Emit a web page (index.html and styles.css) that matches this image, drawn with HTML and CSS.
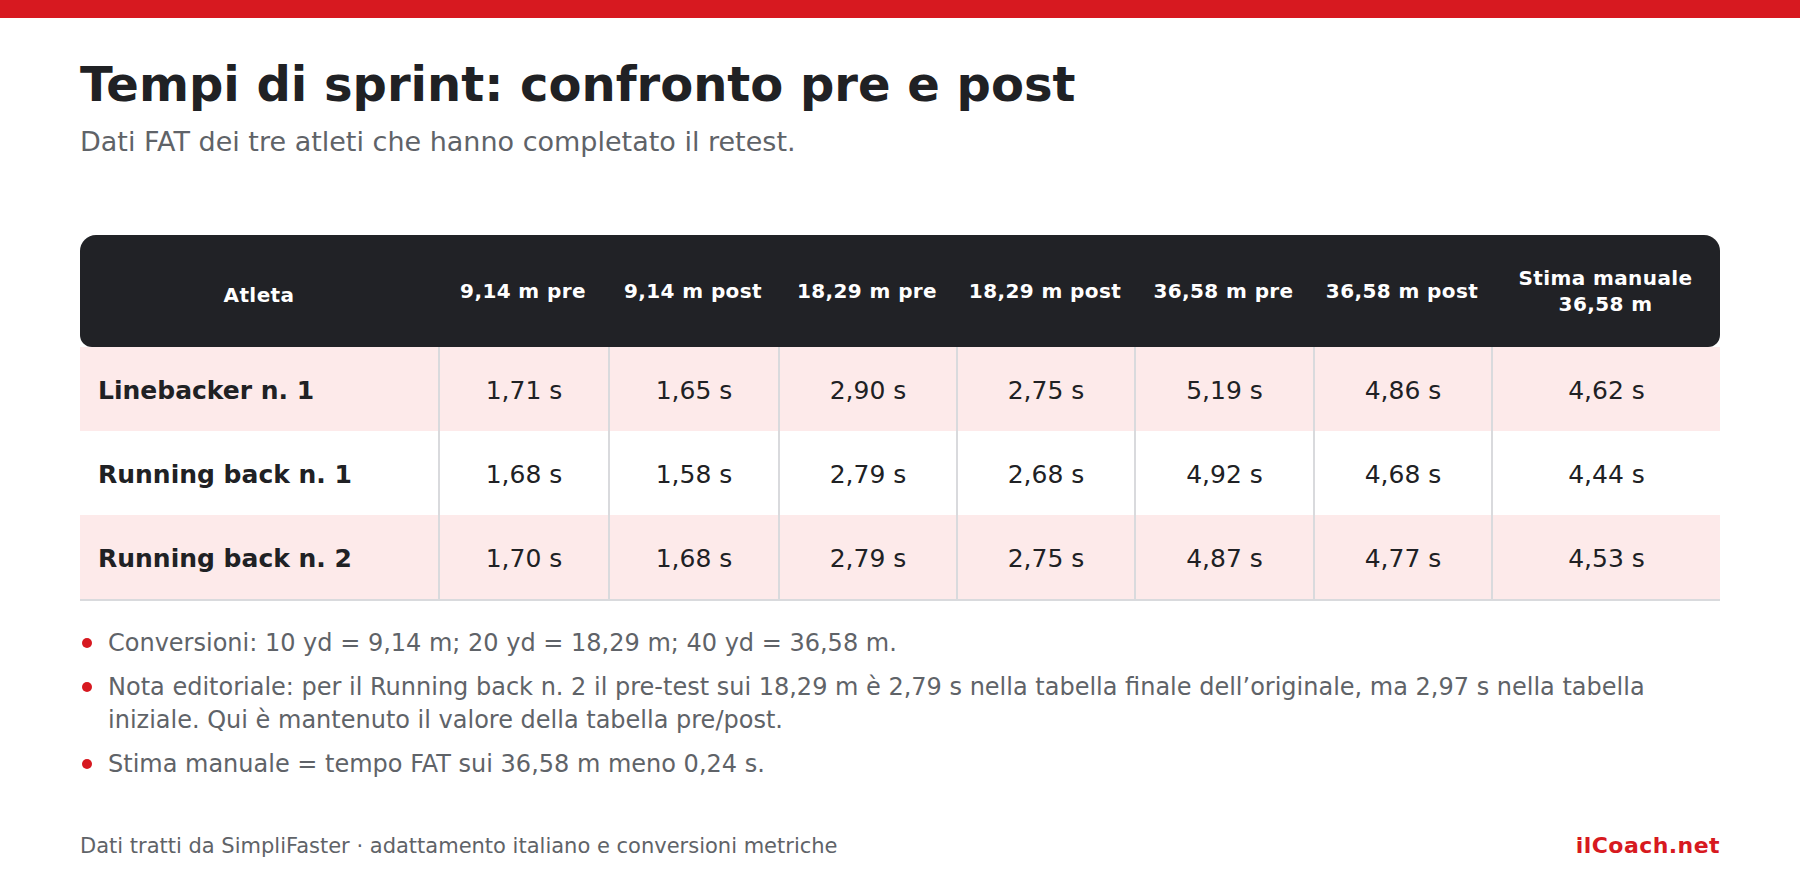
FILE: index.html
```html
<!DOCTYPE html>
<html lang="it">
<head>
<meta charset="utf-8">
<title>Tempi di sprint: confronto pre e post</title>
<link rel="stylesheet" href="styles.css">
</head>
<body>
<div class="topbar"></div>
<main class="page">
  <h1 class="title">Tempi di sprint: confronto pre e post</h1>
  <p class="subtitle">Dati FAT dei tre atleti che hanno completato il retest.</p>

  <table class="data">
    <colgroup>
      <col class="c-name">
      <col class="c-s">
      <col class="c-s">
      <col class="c-m">
      <col class="c-m">
      <col class="c-m2">
      <col class="c-m">
      <col class="c-l">
    </colgroup>
    <thead>
      <tr>
        <th class="th-name">Atleta</th>
        <th>9,14 m pre</th>
        <th>9,14 m post</th>
        <th>18,29 m pre</th>
        <th>18,29 m post</th>
        <th>36,58 m pre</th>
        <th>36,58 m post</th>
        <th>Stima manuale<br>36,58 m</th>
      </tr>
    </thead>
    <tbody>
      <tr class="alt">
        <td class="name">Linebacker n. 1</td>
        <td>1,71 s</td><td>1,65 s</td><td>2,90 s</td><td>2,75 s</td><td>5,19 s</td><td>4,86 s</td><td>4,62 s</td>
      </tr>
      <tr>
        <td class="name">Running back n. 1</td>
        <td>1,68 s</td><td>1,58 s</td><td>2,79 s</td><td>2,68 s</td><td>4,92 s</td><td>4,68 s</td><td>4,44 s</td>
      </tr>
      <tr class="alt last">
        <td class="name">Running back n. 2</td>
        <td>1,70 s</td><td>1,68 s</td><td>2,79 s</td><td>2,75 s</td><td>4,87 s</td><td>4,77 s</td><td>4,53 s</td>
      </tr>
    </tbody>
  </table>

  <ul class="notes">
    <li>Conversioni: 10 yd = 9,14 m; 20 yd = 18,29 m; 40 yd = 36,58 m.</li>
    <li>Nota editoriale: per il Running back n. 2 il pre-test sui 18,29 m è 2,79 s nella tabella finale dell’originale, ma 2,97 s nella tabella iniziale. Qui è mantenuto il valore della tabella pre/post.</li>
    <li>Stima manuale = tempo FAT sui 36,58 m meno 0,24 s.</li>
  </ul>

  <footer class="footer">
    <span class="source">Dati tratti da SimpliFaster · adattamento italiano e conversioni metriche</span>
    <span class="brand">ilCoach.net</span>
  </footer>
</main>
</body>
</html>
```

FILE: styles.css
```css
html, body {
  margin: 0;
  padding: 0;
  background: #ffffff;
}

body {
  font-family: "DejaVu Sans", Verdana, sans-serif;
  color: #202124;
}

.topbar {
  height: 18px;
  background: #d71920;
}

.page {
  padding: 38px 80px 0;
}

.title {
  margin: 0;
  font-size: 48px;
  line-height: 1.2;
  font-weight: 700;
  color: #202124;
}

.subtitle {
  margin: 12px 0 0;
  font-size: 27px;
  line-height: 1.2;
  color: #5f6368;
}

.data {
  margin-top: 77px;
  width: 1640px;
  table-layout: fixed;
  border-collapse: separate;
  border-spacing: 0;
}

.c-name { width: 358px; }
.c-s { width: 170px; }
.c-m { width: 178px; }
.c-m2 { width: 179px; }
.c-l { width: 229px; }

.data th {
  background: #212226;
  color: #ffffff;
  font-size: 20px;
  line-height: 1.3;
  font-weight: 700;
  letter-spacing: 0.02em;
  padding: 30px 6px;
  text-align: center;
  vertical-align: middle;
}

.data th.th-name {
  padding-top: 34px;
  padding-bottom: 26px;
}

.data th:first-child {
  border-radius: 16px 0 0 12px;
}

.data th:last-child {
  border-radius: 0 16px 12px 0;
}

.data td {
  height: 84px;
  padding: 4px 8px 0;
  font-size: 25px;
  text-align: center;
  vertical-align: middle;
  color: #202124;
  border-left: 2px solid #d9dadd;
  box-sizing: border-box;
}

.data td.name {
  border-left: none;
  text-align: left;
  padding-left: 18px;
  font-weight: 700;
}

.data tr.alt td {
  background: #fdeaea;
}

.data tr.last td {
  border-bottom: 2px solid #d9dadd;
  height: 86px;
}

.notes {
  list-style: none;
  margin: 26px 0 0;
  padding: 0;
}

.notes li {
  display: flex;
  font-size: 24px;
  line-height: 1.4;
  color: #5f6368;
}

.notes li + li {
  margin-top: 10px;
}

.notes li::before {
  content: "";
  flex: 0 0 10px;
  height: 10px;
  margin: 11px 16px 0 2px;
  border-radius: 50%;
  background: #d71920;
}

.footer {
  margin-top: 52px;
  display: flex;
  justify-content: space-between;
  align-items: baseline;
}

.source {
  font-size: 21px;
  line-height: 1.2;
  color: #5f6368;
}

.brand {
  font-size: 22px;
  line-height: 1.2;
  font-weight: 700;
  letter-spacing: 0.02em;
  color: #d71920;
}
```
